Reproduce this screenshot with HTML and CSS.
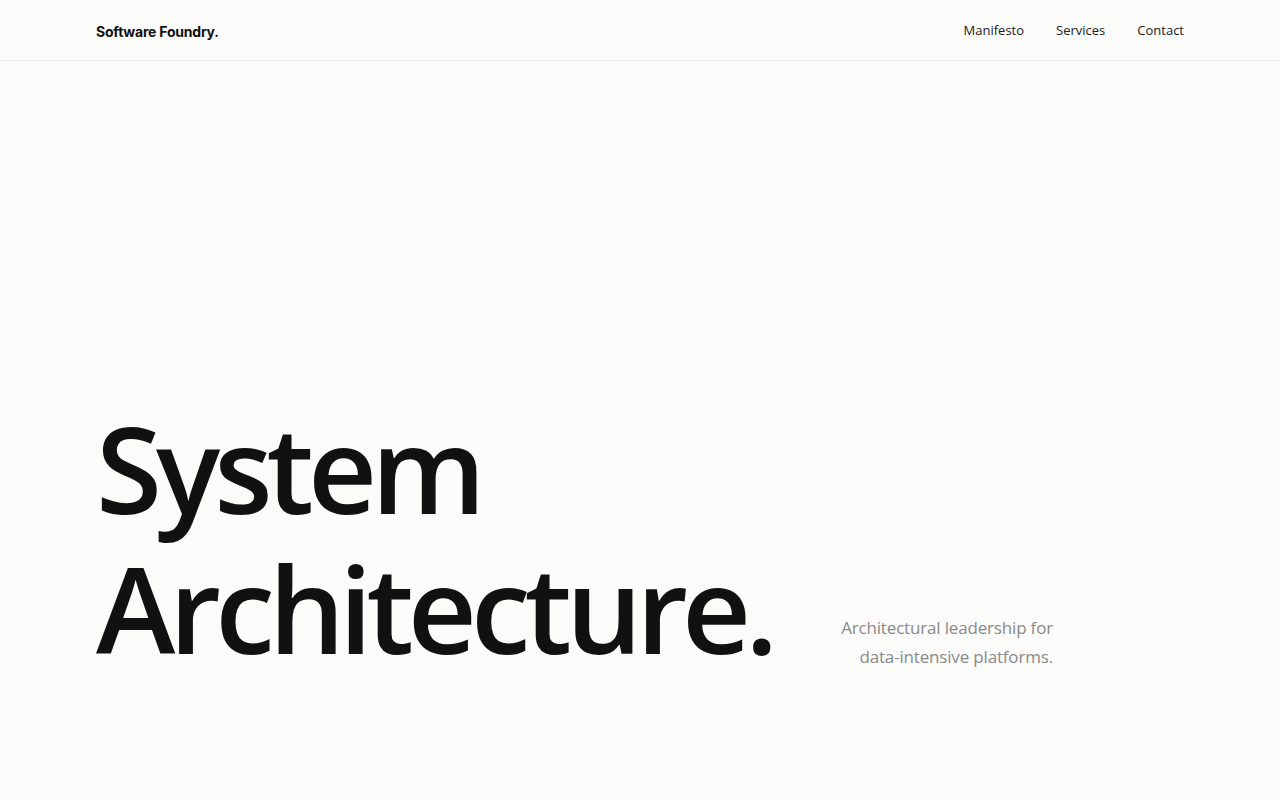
FILE: index.html
```html
<!DOCTYPE html>
<html lang="en">
<head>
<meta charset="utf-8">
<title>Software Foundry</title>
<link rel="stylesheet" href="styles.css">
</head>
<body>
<header class="site-header">
  <a class="logo" href="#">Software Foundry.</a>
  <nav class="nav">
    <a href="#">Manifesto</a>
    <a href="#">Services</a>
    <a href="#">Contact</a>
  </nav>
</header>
<main class="hero">
  <h1 class="headline">System<br>Architecture.</h1>
  <p class="tagline">Architectural leadership for<br>data-intensive platforms.</p>
</main>
</body>
</html>
```

FILE: styles.css
```css
* { box-sizing: border-box; }
html, body { margin: 0; padding: 0; }
body {
  background: #fbfbfa;
  color: #111;
  font-family: "Open Sans", "Noto Sans", sans-serif;
  min-height: 100vh;
  display: flex;
  flex-direction: column;
}
a { color: inherit; text-decoration: none; }

.site-header {
  height: 61px;
  padding: 0 96px;
  display: flex;
  align-items: center;
  justify-content: space-between;
  border-bottom: 1px solid #efefed;
}
.logo {
  font-family: Inter, "Liberation Sans", sans-serif;
  font-weight: 700;
  font-size: 14px;
  letter-spacing: -0.015em;
  color: #111;
  padding-top: 2px;
}
.nav {
  display: flex;
  gap: 32px;
  font-size: 13px;
  color: #222;
}

.hero {
  flex: 1;
  display: flex;
  align-items: flex-end;
  padding: 0 96px 122px;
}
.headline {
  margin: 0;
  font-size: 120px;
  line-height: 140px;
  font-weight: 600;
  letter-spacing: -0.05em;
  color: #111;
  white-space: nowrap;
}
.tagline {
  margin: 0 131px 7px auto;
  text-align: right;
  font-size: 17px;
  line-height: 29px;
  letter-spacing: -0.01em;
  color: #8a8a8a;
  font-weight: 400;
  white-space: nowrap;
}
```
